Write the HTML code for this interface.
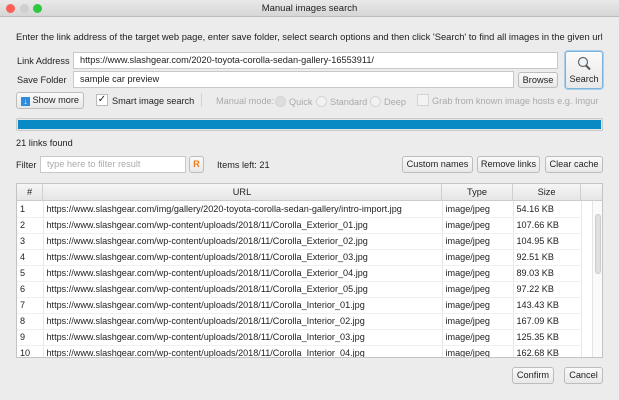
<!DOCTYPE html><html><head><style>
*{box-sizing:border-box}body{margin:0;width:619px;height:400px;background:#ececec;font-family:"Liberation Sans",sans-serif;font-size:9.2px;color:#222;position:relative;overflow:hidden}
.a{position:absolute;white-space:nowrap}
.btn{position:absolute;background:linear-gradient(#fafafa,#e8e8e8);border:1px solid #bdbdbd;border-radius:3px;text-align:center;font-size:9.2px;color:#222;white-space:nowrap}
.inp{position:absolute;background:#fff;border:1px solid #c8c8c8;font-size:9.2px;padding-left:6px;white-space:nowrap}
.g{color:#aaa}
.rad{display:inline-block;width:11px;height:11px;border-radius:50%;border:1px solid #d4d4d4;background:#f2f2f2;vertical-align:-2px;margin-right:3px}
table{border-collapse:collapse;font-size:9.1px;table-layout:fixed}
tr{height:16px}
td{height:16px;border-right:1px solid #e6e6e6;padding:0 3px;border-bottom:1px solid #f0f0f0;line-height:14px;white-space:nowrap;overflow:hidden}
</style></head><body>
<div class="a" style="left:0;top:0;width:619px;height:17px;background:linear-gradient(#e9e9e9,#d6d6d6);border-bottom:1px solid #bbb"></div>
<div class="a" style="left:6px;top:4px;width:9px;height:9px;border-radius:50%;background:#fc5f57"></div>
<div class="a" style="left:20px;top:4px;width:9px;height:9px;border-radius:50%;background:#cfcfcf"></div>
<div class="a" style="left:33px;top:4px;width:9px;height:9px;border-radius:50%;background:#2bc840"></div>
<div class="a" style="left:0;width:619px;top:3px;text-align:center;font-size:9.5px">Manual images search</div>
<div class="a" style="left:16px;top:31px;font-size:9.4px">Enter the link address of the target web page, enter save folder, select search options and then click 'Search' to find all images in the given url</div>
<div class="a" style="left:17px;top:56px">Link Address</div>
<div class="inp" style="left:73px;top:52px;width:485px;height:17px;line-height:15px">https://www.slashgear.com/2020-toyota-corolla-sedan-gallery-16553911/</div>
<div class="a" style="left:17px;top:75px">Save Folder</div>
<div class="inp" style="left:73px;top:71px;width:441px;height:17px;line-height:15px">sample car preview</div>
<div class="btn" style="left:518px;top:72px;width:40px;height:16px;line-height:14px">Browse</div>
<div class="btn" style="left:565px;top:51px;width:38px;height:38px;border-color:#7db4dc;box-shadow:0 0 0 1px #a9cfec"><svg width="16" height="16" style="position:absolute;left:10px;top:4px" viewBox="0 0 16 16"><circle cx="7" cy="6" r="4.5" fill="#eef6fc" stroke="#666" stroke-width="1.2"/><path d="M10 9.5l4 4" stroke="#555" stroke-width="2"/></svg><div style="position:absolute;top:22px;width:100%">Search</div></div>
<div class="btn" style="left:16px;top:92px;width:68px;height:17px;line-height:15px"><span style="display:inline-block;width:9px;height:9px;background:#2a8de0;vertical-align:-1px;color:#fff;font-size:8px;line-height:9px">↓</span> Show more</div>
<div class="a" style="left:96px;top:94px;width:12px;height:12px;background:#fff;border:1px solid #bbb;font-size:10px;line-height:10px;text-align:center">✓</div>
<div class="a" style="left:112px;top:96px">Smart image search</div>
<div class="a" style="left:201px;top:93px;width:1px;height:14px;background:#d4d4d4"></div>
<div class="a g" style="left:216px;top:96px">Manual mode:</div>
<div class="a g" style="left:275px;top:96px"><span class="rad" style="background:#ddd"></span>Quick</div>
<div class="a g" style="left:316px;top:96px"><span class="rad"></span>Standard</div>
<div class="a g" style="left:370px;top:96px"><span class="rad"></span>Deep</div>
<div class="a" style="left:417px;top:94px;width:12px;height:12px;background:#f3f3f3;border:1px solid #d4d4d4"></div>
<div class="a g" style="left:432px;top:96px">Grab from known image hosts e.g. Imgur</div>
<div class="a" style="left:16px;top:118px;width:587px;height:13px;border:1px solid #c9c9c9;border-radius:2px;padding:1px;background:#e6e6e6"><div style="height:9px;background:#0a8ac4"></div></div>
<div class="a" style="left:16px;top:138px">21 links found</div>
<div class="a" style="left:16px;top:160px">Filter</div>
<div class="inp g" style="left:40px;top:156px;width:146px;height:17px;line-height:15px">type here to filter result</div>
<div class="btn" style="left:189px;top:156px;width:15px;height:17px;color:#f07a1a;font-weight:bold;line-height:15px">R</div>
<div class="a" style="left:217px;top:160px">Items left: 21</div>
<div class="btn" style="left:402px;top:156px;width:71px;height:17px;line-height:15px">Custom names</div>
<div class="btn" style="left:477px;top:156px;width:63px;height:17px;line-height:15px">Remove links</div>
<div class="btn" style="left:545px;top:156px;width:58px;height:17px;line-height:15px">Clear cache</div>
<div class="a" style="left:16px;top:183px;width:587px;height:175px;background:#fff;border:1px solid #c4c4c4;overflow:hidden">
<div style="display:flex;height:17px;background:linear-gradient(#f6f6f6,#e6e6e6);border-bottom:1px solid #ccc;line-height:16px;text-align:center">
<div style="width:26px;border-right:1px solid #d0d0d0">#</div><div style="width:399px;border-right:1px solid #d0d0d0">URL</div><div style="width:71px;border-right:1px solid #d0d0d0">Type</div><div style="width:68px;border-right:1px solid #d0d0d0">Size</div><div style="flex:1"></div></div>
<table style="width:564px"><colgroup><col width="26"><col width="399"><col width="71"><col width="68"></colgroup>
<tr><td>1</td><td>https://www.slashgear.com/img/gallery/2020-toyota-corolla-sedan-gallery/intro-import.jpg</td><td>image/jpeg</td><td>54.16 KB</td></tr>
<tr><td>2</td><td>https://www.slashgear.com/wp-content/uploads/2018/11/Corolla_Exterior_01.jpg</td><td>image/jpeg</td><td>107.66 KB</td></tr>
<tr><td>3</td><td>https://www.slashgear.com/wp-content/uploads/2018/11/Corolla_Exterior_02.jpg</td><td>image/jpeg</td><td>104.95 KB</td></tr>
<tr><td>4</td><td>https://www.slashgear.com/wp-content/uploads/2018/11/Corolla_Exterior_03.jpg</td><td>image/jpeg</td><td>92.51 KB</td></tr>
<tr><td>5</td><td>https://www.slashgear.com/wp-content/uploads/2018/11/Corolla_Exterior_04.jpg</td><td>image/jpeg</td><td>89.03 KB</td></tr>
<tr><td>6</td><td>https://www.slashgear.com/wp-content/uploads/2018/11/Corolla_Exterior_05.jpg</td><td>image/jpeg</td><td>97.22 KB</td></tr>
<tr><td>7</td><td>https://www.slashgear.com/wp-content/uploads/2018/11/Corolla_Interior_01.jpg</td><td>image/jpeg</td><td>143.43 KB</td></tr>
<tr><td>8</td><td>https://www.slashgear.com/wp-content/uploads/2018/11/Corolla_Interior_02.jpg</td><td>image/jpeg</td><td>167.09 KB</td></tr>
<tr><td>9</td><td>https://www.slashgear.com/wp-content/uploads/2018/11/Corolla_Interior_03.jpg</td><td>image/jpeg</td><td>125.35 KB</td></tr>
<tr><td>10</td><td>https://www.slashgear.com/wp-content/uploads/2018/11/Corolla_Interior_04.jpg</td><td>image/jpeg</td><td>162.68 KB</td></tr>
</table>
<div style="position:absolute;left:575px;top:17px;width:11px;height:157px;background:#fafafa;border-left:1px solid #e4e4e4"><div style="margin:13px 2px;height:60px;border-radius:4px;background:#e0e0e0;border:1px solid #ccc"></div></div>
</div>
<div class="btn" style="left:512px;top:367px;width:42px;height:17px;line-height:15px">Confirm</div>
<div class="btn" style="left:564px;top:367px;width:39px;height:17px;line-height:15px">Cancel</div>
</body></html>
